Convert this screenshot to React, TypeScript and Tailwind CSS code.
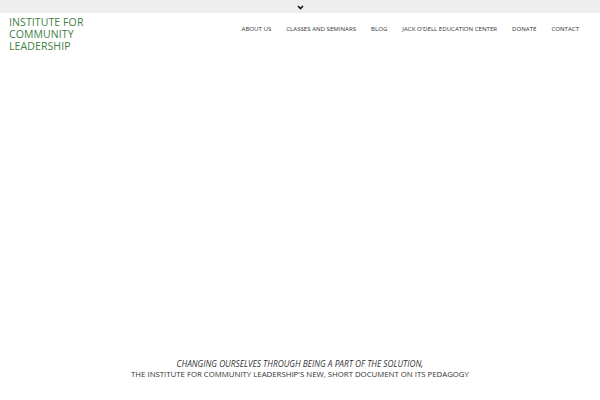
import React from 'react';

const navItems = ['ABOUT US', 'CLASSES AND SEMINARS', 'BLOG', "JACK O'DELL EDUCATION CENTER", 'DONATE', 'CONTACT'];

const App: React.FC = () => {
    return (
        <div className="w-[600px] h-[400px] bg-white flex flex-col overflow-hidden" style={{ fontFamily: '"Open Sans", sans-serif' }}>
            {/* Top toggle bar */}
            <div className="h-[13px] bg-[#eeeeee] flex items-center justify-center">
                <svg width="7" height="5" viewBox="0 0 7 5" className="mt-[1px]">
                    <path d="M1 1 L3.5 3.5 L6 1" stroke="#111" strokeWidth="1.6" fill="none" />
                </svg>
            </div>

            {/* Header */}
            <div className="flex items-start justify-between pl-[9px] pr-[21px] pt-[3px]">
                <div className="text-[10.5px] leading-[12px] text-[#3f7f3f] tracking-[0.1px]">
                    <div>INSTITUTE FOR</div>
                    <div>COMMUNITY</div>
                    <div>LEADERSHIP</div>
                </div>
                <nav className="flex gap-[15px] pt-[8px] text-[6.1px] text-[#333] leading-[9px]">
                    {navItems.map(item => (
                        <span key={item}>{item}</span>
                    ))}
                </nav>
            </div>

            {/* Body spacer */}
            <div className="flex-1" />

            {/* Caption */}
            <div className="text-center leading-[11px] text-[#333] pb-[20px]">
                <div className="italic text-[8.3px]">CHANGING OURSELVES THROUGH BEING A PART OF THE SOLUTION,</div>
                <div className="text-[7.8px]">THE INSTITUTE FOR COMMUNITY LEADERSHIP'S NEW, SHORT DOCUMENT ON ITS PEDAGOGY</div>
            </div>
        </div>
    );
};

export default App;
